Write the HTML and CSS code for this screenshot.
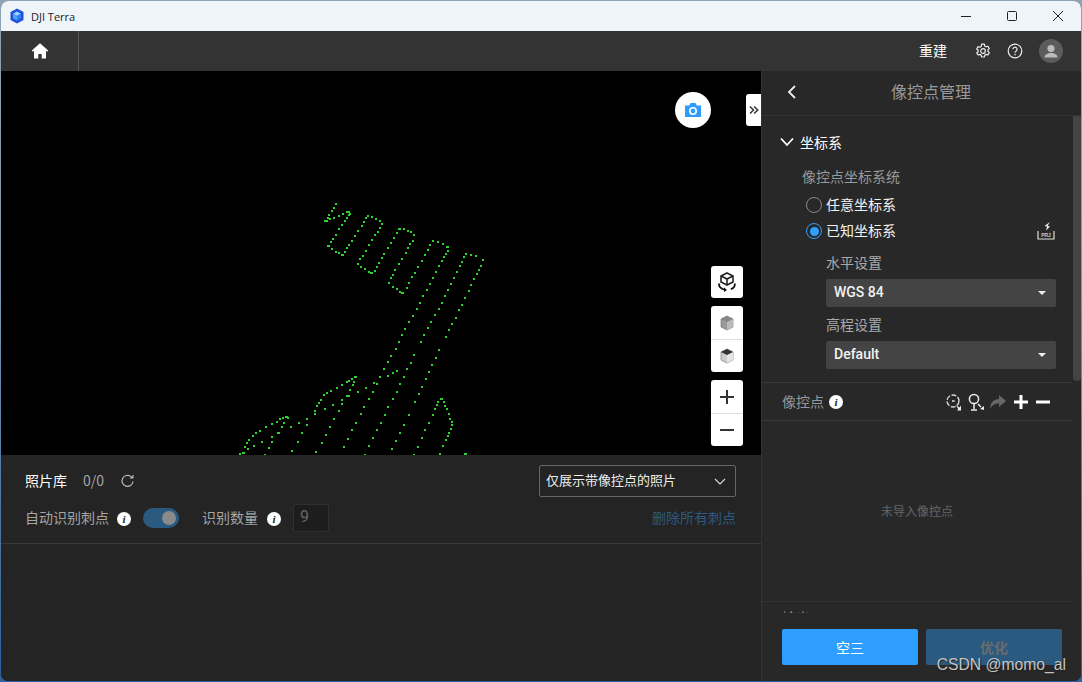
FILE: index.html
```html
<!DOCTYPE html>
<html lang="zh-CN">
<head>
<meta charset="utf-8">
<title>DJI Terra</title>
<link rel="stylesheet" href="styles.css">
</head>
<body>
<div class="window">
  <header class="titlebar">
    <div class="brand">
      <svg class="logo" viewBox="0 0 16 16" width="16" height="16"><polygon points="8,0.5 14.5,4 14.5,12 8,15.500 1.500,12 1.500,4" fill="#2450e0"/><polygon points="8,3.500 12,5.700 8,8 4,5.700" fill="#8fd8ff"/><polygon points="4,5.700 8,8 8,12.500 4,10.300" fill="#4aa4f5"/><polygon points="12,5.700 8,8 8,12.500 12,10.300" fill="#2f7df0"/></svg>
      <span class="app-name">DJI Terra</span>
    </div>
    <div class="win-controls">
      <svg viewBox="0 0 12 12" width="12" height="12"><path d="M1 6.500h10" stroke="#222" stroke-width="1" fill="none"/></svg>
      <svg viewBox="0 0 12 12" width="12" height="12"><rect x="1.500" y="1.500" width="9" height="9" rx="1" stroke="#222" stroke-width="1" fill="none"/></svg>
      <svg viewBox="0 0 12 12" width="12" height="12"><path d="M1 1l10 10M11 1L1 11" stroke="#222" stroke-width="1" fill="none"/></svg>
    </div>
  </header>

  <nav class="topbar">
    <div class="home">
      <svg viewBox="0 0 18 18" width="18" height="18"><path d="M9 1.200L.8 8.600l1 1.100L3 8.800V16.500h4.300v-4.600h3.400v4.600H15V8.800l1.200.9 1-1.100z" fill="#fff"/></svg>
    </div>
    <div class="top-actions">
      <span class="rebuild">重建</span>
      <svg class="top-gear" viewBox="0 0 16 16" width="16" height="16"><path d="M6.600 1.200h2.800l.4 1.900 1.300.7 1.800-.6 1.400 2.400-1.400 1.300v1.400l1.400 1.300-1.400 2.400-1.800-.6-1.300.7-.4 1.900H6.600l-.4-1.900-1.300-.7-1.800.6L1.700 10l1.400-1.300V7.300L1.700 6l1.400-2.400 1.800.6 1.300-.7z" fill="none" stroke="#eee" stroke-width="1.200" stroke-linejoin="round"/><circle cx="8" cy="8" r="2.300" fill="none" stroke="#eee" stroke-width="1.200"/></svg>
      <svg class="top-help" viewBox="0 0 16 16" width="16" height="16"><circle cx="8" cy="8" r="6.800" fill="none" stroke="#eee" stroke-width="1.200"/><path d="M5.900 6.200A2.100 2.100 0 1 1 9.200 8c-.8.5-1.200.9-1.200 1.800" fill="none" stroke="#eee" stroke-width="1.200"/><circle cx="8" cy="11.600" r=".8" fill="#eee"/></svg>
      <div class="avatar">
        <svg viewBox="0 0 24 24" width="24" height="24"><circle cx="12" cy="9.500" r="3.600" fill="#bbb"/><path d="M5.500 18.500c0-3 3-4.500 6.500-4.500s6.500 1.500 6.500 4.500z" fill="#bbb"/></svg>
      </div>
    </div>
  </nav>

  <main class="main">
    <section class="work">
      <div class="viewport">
        <svg class="cloud" viewBox="0 0 760 384" width="760" height="384">
          <g transform="translate(299 119) scale(.3333)" fill="none" stroke="#2fd32f" stroke-width="6">
            <path d="M105 42h6M100 55h6M93 63h6M84 74h6M80 84h6M72 92h12M88 88h6M100 84h6M113 77h6M125 71h6M138 66h12M146 72h6M143 75h6M137 85h6M133 92h6M124 104h6M115 118h6M104 135h6M97 147h6M90 155h6M82 168h9M92 177h6M104 185h6M113 188h6M122 195h9M132 187h6M139 175h6M145 165h6M153 152h6M162 138h6M172 122h6M182 107h6M188 95h6M195 85h6M200 78h8M213 82h6M226 86h6M238 92h6M243 102h6M237 115h6M230 126h6M223 136h6M214 150h6M205 165h6M195 183h6M185 197h6M178 208h6M170 222h8M180 232h6M192 238h6M204 245h6M210 250h8M222 243h6M228 230h6M235 218h6M242 205h6M250 192h6M260 175h6M270 158h6M280 143h6M288 128h6M295 118h8M309 117h6M320 122h6M330 127h6M338 135h6M335 152h6M328 162h6M322 173h6M314 188h6M304 206h6M295 222h6M283 240h6M276 254h6M270 265h6M263 280h6M277 292h6M288 298h6M297 305h6M303 309h9M318 295h6M325 280h6M334 262h6M343 248h6M352 230h6M362 212h6M372 195h6M380 180h6M388 165h6M395 152h8M410 157h6M425 162h6M438 170h8M440 182h6M436 192h6M429 200h6M423 212h6M415 228h6M406 245h6M397 263h6M388 281h6M377 300h6M367 319h6M358 338h6M348 356h6M337 378h6M495 192h6M510 194h6M526 199h6M545 210h6M540 228h6M534 240h6M527 252h6M520 266h6M511 285h6M503 304h6M493 323h6M484 344h6M475 361h6M466 383h6M490 200h6M484 215h6M478 228h6M469 245h6M460 263h6M451 281h6M442 300h6M433 319h6M423 338h6M413 356h6M403 375h6"/>
          </g>
          <g transform="translate(219 249) scale(.3333)" fill="none" stroke="#2fd32f" stroke-width="6">
            <path d="M565 5h6M553 27h6M544 44h6M533 66h6M524 87h6M511 108h6M502 127h6M490 148h6M478 172h6M467 193h6M455 217h6M444 238h6M430 262h6M421 283h6M406 308h6M394 331h6M382 357h6M370 380h6M631 5h6M621 24h6M610 45h6M601 66h6M580 106h6M570 128h6M559 148h6M548 170h6M538 191h6M527 215h6M515 238h6M502 262h6M493 284h6M480 308h6M469 329h6M457 353h6M445 379h6M432 404h6M694 13h6M684 31h6M675 50h6M655 90h6M644 113h6M634 134h6M625 156h6M614 178h6M604 200h6M594 222h6M583 245h6M563 285h6M550 315h6M538 340h6M526 364h6M514 388h6M402 172h9M392 178h6M385 182h6M377 186h6M362 195h6M347 203h6M330 213h6M319 218h6M309 226h6M300 240h6M295 248h6M289 259h6M282 273h6M283 283h6M400 185h6M395 196h6M388 210h6M377 229h12M362 241h6M364 253h6M355 272h6M340 298h6M327 322h6M315 346h6M302 370h6M286 397h6M335 256h6M311 268h6M259 314h6M244 338h6M230 365h6M214 393h6M258 296h6M234 308h6M209 322h6M196 290h9M187 293h6M177 298h6M167 305h6M154 312h6M135 322h6M117 332h6M104 338h6M95 348h6M84 361h6M79 370h6M72 382h6M82 388h6M65 398h9M57 403h6M200 295h6M190 309h6M182 322h6M172 338h9M152 352h6M154 367h6M145 385h6M132 404h6M124 367h6M100 379h6M659 238h9M652 245h6M649 254h6M643 268h6M635 285h6M625 308h6M613 331h6M603 355h6M592 380h6M579 405h6M669 245h6M672 257h6M677 268h6M683 283h6M688 296h6M694 306h6M694 316h6M690 328h6M685 338h6M681 348h6M675 361h6M667 379h6M658 402h6M733 402h9M502 167h6M517 160h6M528 154h6M459 190h6M434 203h6M411 216h6"/>
          </g>
        </svg>

        <button class="camera" aria-label="camera">
          <svg viewBox="0 0 18 18" width="18" height="18"><path d="M1 4.500h4.200L6.500 2h5l1.300 2.500H17V16H1z" fill="#2f9bff"/><circle cx="9" cy="10" r="3.200" fill="none" stroke="#fff" stroke-width="1.600"/></svg>
        </button>
        <button class="collapse" aria-label="collapse">
          <svg viewBox="0 0 10 10" width="10" height="10"><path d="M1 1.500L4.500 5 1 8.500M5.200 1.500L8.700 5 5.200 8.500" fill="none" stroke="#333" stroke-width="1.500"/></svg>
        </button>

        <div class="tools">
          <div class="tool-group">
            <div class="tool">
              <svg viewBox="0 0 22 22" width="22" height="22"><path d="M11 2l6 3v6l-6 3-6-3V5z" fill="none" stroke="#222" stroke-width="1.600"/><path d="M5 5l6 3 6-3M11 8v6" fill="none" stroke="#222" stroke-width="1.600"/><path d="M3.500 12.500C2 15 5 18.500 9.500 18.800M18.500 12.500c1.200 2-.7 4.500-3.700 5.700" fill="none" stroke="#111" stroke-width="1.800"/><path d="M8 16.500l3 2.400-3 2z" fill="#111"/></svg>
            </div>
          </div>
          <div class="tool-group">
            <div class="tool">
              <svg viewBox="0 0 16 16" width="16" height="16"><polygon points="8,1 14,4 14,12 8,15 2,12 2,4" fill="#999" stroke="#666" stroke-width=".6"/><polygon points="8,7 14,4 14,12 8,15" fill="#bbb"/><polygon points="8,1 14,4 8,7 2,4" fill="#888"/></svg>
            </div>
            <div class="tool">
              <svg viewBox="0 0 16 16" width="16" height="16"><polygon points="8,1 14,4 14,12 8,15 2,12 2,4" fill="#ccc" stroke="#666" stroke-width=".6"/><polygon points="8,7 14,4 14,12 8,15" fill="#e4e4e4"/><polygon points="8,1 14,4 8,7 2,4" fill="#333"/></svg>
            </div>
          </div>
          <div class="tool-group">
            <div class="tool">
              <svg viewBox="0 0 14 14" width="14" height="14"><path d="M7 0v14M0 7h14" stroke="#333" stroke-width="2"/></svg>
            </div>
            <div class="tool">
              <svg viewBox="0 0 14 14" width="14" height="14"><path d="M0 7h14" stroke="#333" stroke-width="2"/></svg>
            </div>
          </div>
        </div>
      </div>

      <div class="photos">
        <div class="photo-head">
          <div class="photo-row">
            <div class="photo-title">
              <span class="strong">照片库</span>
              <span class="count">0/0</span>
              <svg class="refresh" viewBox="0 0 16 16" width="16" height="16"><path d="M13 8.500A5.500 5.500 0 1 1 11 3.600" fill="none" stroke="#bbb" stroke-width="1.200"/><path d="M13.500 1.500v4h-4z" fill="#bbb"/></svg>
            </div>
            <div class="filter">
              <span class="filter-text">仅展示带像控点的照片</span>
              <svg class="filter-arrow" viewBox="0 0 12 8" width="12" height="8"><path d="M1 1l5 5 5-5" fill="none" stroke="#ddd" stroke-width="1.100"/></svg>
            </div>
          </div>
          <div class="photo-row second">
            <div class="auto">
              <span class="muted">自动识别刺点</span>
              <i class="info low">i</i>
              <span class="toggle"><span class="knob"></span></span>
              <span class="muted qty">识别数量</span>
              <i class="info low">i</i>
              <span class="num">9</span>
            </div>
            <span class="clear">删除所有刺点</span>
          </div>
        </div>
      </div>
    </section>

    <aside class="side">
      <div class="side-head">
        <svg class="back" viewBox="0 0 10 16" width="10" height="16"><path d="M8 2L2 8l6 6" fill="none" stroke="#eee" stroke-width="1.800"/></svg>
        <span class="side-title">像控点管理</span>
      </div>

      <div class="side-scroll">
        <div class="scrollbar"></div>
        <div class="coord">
          <div class="coord-head">
            <svg viewBox="0 0 14 10" width="14" height="10"><path d="M1 1.500L7 8l6-6.500" fill="none" stroke="#fff" stroke-width="1.800"/></svg>
            <span>坐标系</span>
          </div>
          <div class="coord-label">像控点坐标系统</div>
          <div class="radio-row"><span class="radio"></span><span class="radio-text">任意坐标系</span></div>
          <div class="radio-row"><span class="radio on"></span><span class="radio-text">已知坐标系</span>
            <svg class="prj" viewBox="0 0 18 18" width="18" height="18"><path d="M1 9v8h16V9" fill="none" stroke="#ddd" stroke-width="1.200"/><path d="M13 0L7.500 4l2.500.4L9 8.500l4-4-2.500-.5z" fill="#f2f2f2"/><text x="9" y="15" text-anchor="middle" class="prj-text">PRJ</text></svg>
          </div>
          <div class="sub-label">水平设置</div>
          <div class="select"><span class="select-text">WGS 84</span><i class="caret"></i></div>
          <div class="sub-label next">高程设置</div>
          <div class="select"><span class="select-text">Default</span><i class="caret"></i></div>
        </div>

        <div class="gcp-head">
          <span class="gcp-title">像控点</span>
          <i class="info near">i</i>
          <div class="gcp-tools">
            <svg viewBox="0 0 18 18" width="18" height="18"><circle cx="8" cy="8" r="6" fill="none" stroke="#ddd" stroke-width="1.300" stroke-dasharray="5 1.500"/><path d="M7 8h3M8 7v2" stroke="#ddd" stroke-width="1"/><path d="M11 12l3.500 2.500 1.500-2v5h-4l1.200-1.500z" fill="#eee"/></svg>
            <svg viewBox="0 0 18 18" width="18" height="18"><circle cx="7" cy="6" r="4.600" fill="none" stroke="#eee" stroke-width="1.500"/><path d="M7 11v5M4 17h6M11 11l3 3" stroke="#eee" stroke-width="1.500"/><path d="M13 16l4-3v4z" fill="#eee"/></svg>
            <svg viewBox="0 0 18 18" width="18" height="18"><path d="M10 2l7 6-7 6v-3.500C6 10.500 3 12 1 16c0-6 3-9.500 9-10z" fill="#666"/></svg>
            <svg viewBox="0 0 16 16" width="16" height="16"><path d="M8 1v14M1 8h14" stroke="#fff" stroke-width="3"/></svg>
            <svg viewBox="0 0 16 16" width="16" height="16"><path d="M1 8h14" stroke="#fff" stroke-width="3"/></svg>
          </div>
        </div>

        <div class="gcp-empty"><span class="empty-text">未导入像控点</span></div>
        <div class="clipped">输出</div>
      </div>

      <div class="side-foot">
        <button class="btn primary">空三</button>
        <button class="btn disabled">优化</button>
      </div>
    </aside>
  </main>
  <span class="watermark">CSDN @momo_al</span>
</div>
</body>
</html>
```
FILE: styles.css
```css
* { box-sizing: border-box; }
html, body { margin: 0; height: 100%; }
body {
  width: 1082px;
  height: 682px;
  padding: 1px;
  overflow: hidden;
  background: linear-gradient(#8ea4b6 0, #7d97ad 40%, #2f5f9c 100%);
  font-family: "Noto Sans CJK SC", "Noto Sans", sans-serif;
  font-size: 14px;
  color: #ddd;
}
button { border: 0; padding: 0; font: inherit; }
i { font-style: normal; }

.window {
  position: relative;
  width: 1080px;
  height: 680px;
  border-radius: 7px;
  overflow: hidden;
  display: flex;
  flex-direction: column;
  background: #242424;
}

.titlebar {
  height: 30px;
  flex: none;
  display: flex;
  justify-content: space-between;
  align-items: center;
  background: #eff4f9;
  color: #1c1c1c;
}
.brand { display: flex; align-items: center; padding-left: 8px; gap: 6px; }
.app-name { font-family: "Open Sans", "Liberation Sans", sans-serif; font-size: 11px; }
.win-controls { display: flex; align-items: center; gap: 34px; padding-right: 17px; }

.topbar {
  height: 40px;
  flex: none;
  display: flex;
  justify-content: space-between;
  align-items: stretch;
  background: #333;
}
.home {
  width: 78px;
  display: flex;
  align-items: center;
  justify-content: center;
  border-right: 1px solid #555;
}
.top-actions { display: flex; align-items: center; padding-right: 18px; }
.rebuild { color: #fff; margin-right: 28px; margin-left: -1px; padding-bottom: 2px; }
.top-gear { margin-right: 16px; }
.top-help { margin-right: 16px; }
.avatar { width: 24px; height: 24px; border-radius: 50%; background: #5c5c5c; overflow: hidden; }

.main { flex: 1; display: flex; min-height: 0; }
.work { width: 760px; flex: none; display: flex; flex-direction: column; }

.viewport { position: relative; height: 384px; flex: none; background: #000; overflow: hidden; }
.cloud { display: block; shape-rendering: crispEdges; }
.camera {
  position: absolute;
  left: 674px;
  top: 21px;
  width: 36px;
  height: 36px;
  border-radius: 50%;
  background: #fff;
  display: flex;
  align-items: center;
  justify-content: center;
}
.collapse {
  position: absolute;
  right: 0;
  top: 23px;
  width: 15px;
  height: 32px;
  background: #fff;
  border-radius: 3px 0 0 3px;
  display: flex;
  align-items: center;
  justify-content: center;
}
.tools {
  position: absolute;
  left: 710px;
  top: 195px;
  display: flex;
  flex-direction: column;
  gap: 8px;
}
.tool-group { width: 32px; background: #fff; border-radius: 3px; overflow: hidden; }
.tool {
  height: 33px;
  display: flex;
  align-items: center;
  justify-content: center;
}
.tool:only-child { height: 32px; }
.tool + .tool { border-top: 1px solid #ddd; }

.photos { flex: 1; background: #242424; }
.photo-head { height: 89px; padding: 10px 25px 0 24px; border-bottom: 1px solid #3a3a3a; }
.photo-row { display: flex; justify-content: space-between; align-items: center; height: 32px; }
.photo-row.second { height: 28px; margin-top: 7px; }
.photo-title { display: flex; align-items: center; }
.strong { color: #fff; padding-bottom: 3px; }
.count { color: #a5a5a5; margin-left: 16px; padding-bottom: 3px; }
.refresh { margin-left: 16px; }
.filter {
  width: 197px;
  height: 32px;
  padding: 0 9px 0 6px;
  border: 1px solid #666;
  border-radius: 2px;
  display: flex;
  justify-content: space-between;
  align-items: center;
  font-size: 13px;
  color: #eee;
}
.filter-text { padding-bottom: 4px; }
.filter-arrow { margin-top: 2px; }
.auto { display: flex; align-items: center; }
.muted { color: #a5a5a5; padding-bottom: 2px; }
.info {
  width: 14px;
  height: 14px;
  margin-left: 8px;
  border-radius: 50%;
  background: #fff;
  color: #222;
  font: italic bold 11px/14px "Liberation Serif", serif;
  text-align: center;
  flex: none;
}
.info.low { margin-top: 2px; }
.info.near { margin-left: 5px; }
.toggle {
  width: 36px;
  height: 20px;
  margin-left: 12px;
  padding: 3px 3px;
  border-radius: 10px;
  background: #2a5a80;
  display: flex;
  justify-content: flex-end;
}
.knob { width: 14px; height: 14px; border-radius: 50%; background: #8a8a8a; }
.qty { margin-left: 23px; margin-right: 1px; }
.num {
  width: 36px;
  height: 28px;
  margin-left: 12px;
  padding-left: 6px;
  background: #1d1d1d;
  border: 1px solid #2f2f2f;
  border-radius: 2px;
  color: #666;
  line-height: 24px;
  font-family: "Roboto", sans-serif;
  font-size: 16px;
}
.clear { color: #2c5a80; padding-bottom: 2px; }

.side {
  flex: 1;
  display: flex;
  flex-direction: column;
  background: #282828;
  border-left: 1px solid #333;
}
.side-head {
  height: 45px;
  flex: none;
  display: flex;
  align-items: center;
  border-bottom: 1px solid #333;
  padding: 0 0 2px 25px;
}
.back { margin-right: 94px; flex: none; }
.side-title { font-size: 16px; color: #9a9a9a; padding-bottom: 2px; }

.side-scroll { position: relative; flex: 1; min-height: 0; overflow: hidden; }
.scrollbar {
  position: absolute;
  right: 0;
  top: 0;
  width: 8px;
  height: 265px;
  background: #444;
  border-radius: 0 0 4px 4px;
}
.coord {
  width: 310px;
  height: 267px;
  padding-top: 13px;
  border-bottom: 1px solid #3a3a3a;
}
.coord-head {
  height: 28px;
  padding: 0 0 2px 18px;
  display: flex;
  align-items: center;
  gap: 6px;
  color: #fff;
}
.coord-label {
  height: 20px;
  margin-top: 10px;
  padding-left: 40px;
  line-height: 18px;
  color: #999;
}
.radio-row {
  height: 26px;
  padding-left: 44px;
  padding-right: 15px;
  display: flex;
  align-items: center;
  gap: 4px;
  color: #f2f2f2;
}
.radio-text { padding-bottom: 2px; }
.coord-label + .radio-row { margin-top: 5px; }
.radio {
  width: 16px;
  height: 16px;
  border: 1.5px solid #8a8a8a;
  border-radius: 50%;
  flex: none;
}
.radio.on { border-color: #2e9fff; padding: 2.5px; background: #2e9fff content-box; }
.prj { margin-left: auto; margin-right: 2px; }
.prj-text { font-family: "Liberation Sans", sans-serif; font-size: 5px; font-weight: 700; fill: #ccc; }
.sub-label {
  height: 20px;
  margin-top: 9px;
  padding-left: 64px;
  line-height: 18px;
  color: #aaa;
}
.sub-label.next { margin-top: 8px; }
.select {
  width: 230px;
  height: 28px;
  margin: 6px 0 0 64px;
  padding: 0 10px 0 8px;
  display: flex;
  align-items: center;
  justify-content: space-between;
  background: #444;
  border-radius: 2px;
  font-family: "Roboto", "Liberation Sans", sans-serif;
  font-size: 14px;
  font-weight: 500;
  color: #f2f2f2;
}
.select-text { padding-bottom: 2px; }
.caret {
  width: 0;
  height: 0;
  border-left: 4px solid transparent;
  border-right: 4px solid transparent;
  border-top: 4px solid #eee;
}

.gcp-head {
  width: 310px;
  height: 38px;
  padding: 0 20px;
  display: flex;
  align-items: center;
  border-bottom: 1px solid #3a3a3a;
}
.gcp-title { color: #999; padding-bottom: 2px; }
.gcp-tools {
  margin-left: auto;
  margin-right: 1px;
  display: flex;
  align-items: center;
  gap: 6px;
}
.gcp-tools svg:nth-child(1), .gcp-tools svg:nth-child(2) { margin-right: -2px; }
.gcp-empty {
  width: 310px;
  height: 181px;
  display: flex;
  align-items: center;
  justify-content: center;
  font-size: 12px;
  color: #666;
  border-bottom: 1px solid #333;
}
.empty-text { padding-bottom: 2px; }
.clipped { padding: 5px 0 0 20px; line-height: 20px; color: #888; }

.side-foot {
  height: 68px;
  flex: none;
  padding: 16px 19px 16px 20px;
  display: flex;
  gap: 8px;
}
.btn { width: 136px; height: 36px; border-radius: 2px; font-size: 14px; }
.primary { background: #2e9fff; color: #fff; }
.disabled { background: #2a5a80; color: #6c6c6c; font-weight: 700; }

.watermark {
  position: absolute;
  right: 15px;
  bottom: 7px;
  font-family: "Liberation Sans", sans-serif;
  font-size: 15.7px;
  color: #c4c4c4;
  text-shadow: 1px 1px 1px #222;
}
```
